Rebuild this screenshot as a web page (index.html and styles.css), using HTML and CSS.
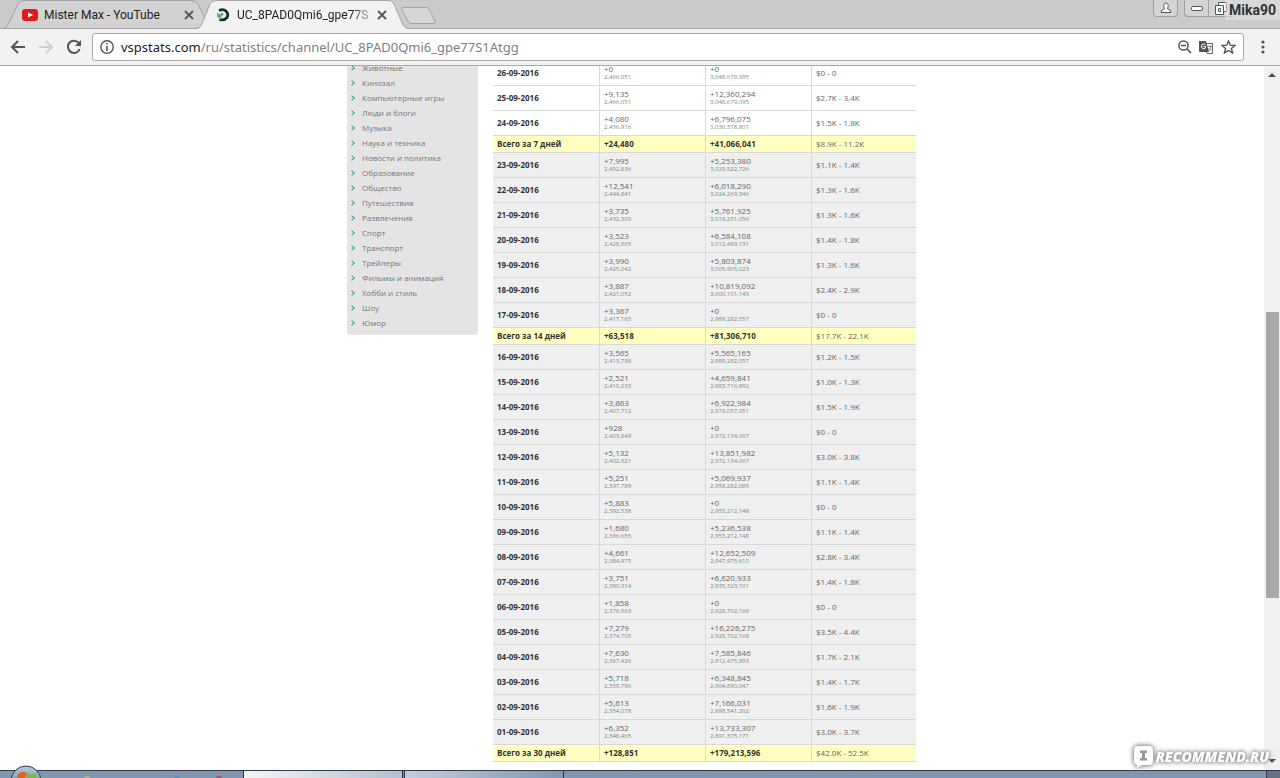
FILE: index.html
```html
<!DOCTYPE html>
<html lang="ru">
<head>
<meta charset="utf-8">
<title>UC_8PAD0Qmi6_gpe77S1Atgg</title>
<link rel="stylesheet" href="styles.css">
</head>
<body>
<div class="screen">
  <header class="tabstrip">
    <svg class="tab-shapes" width="450" height="29" viewBox="0 0 450 29" aria-hidden="true">
      <path d="M0 28.5H3Q7 28.5 9 23L18 4Q20 .5 23 .5H192Q196 .5 198 4L210 28.5" fill="#d2d2d2" stroke="#a3a3a3"/>
      <path d="M196 29Q200 29 202 24L210 4Q212 .5 216 .5H388Q392 .5 394 4L403 25Q405 28.5 409 28.5H450V29Z" fill="#f2f2f2"/>
      <path d="M0 28.5H196Q200 28.5 202 24L210 4Q212 .5 216 .5H388Q392 .5 394 4L403 25Q405 28.5 409 28.5H450" fill="none" stroke="#a3a3a3"/>
      <path d="M404 7.500H426Q428 7.500 429 9L435 21Q436 23.500 434 23.500H411Q409 23.500 408 21L402 10Q401 7.500 404 7.500Z" fill="#d6d6d6" stroke="#a3a3a3"/>
    </svg>
    <div class="tab tab-first">
      <svg width="16" height="12" viewBox="0 0 16 12"><rect width="16" height="12" rx="3" fill="#dd1d1d"/><path d="M6 3.500V8.500L11 6Z" fill="#fff"/></svg>
      <span class="tab-title">Mister Max - YouTube</span>
      <button class="close" aria-label="Закрыть"><svg width="10" height="10" viewBox="0 0 10 10"><path d="M1 1L9 9M9 1L1 9" stroke="#555" stroke-width="1.800"/></svg></button>
    </div>
    <div class="tab tab-active">
      <svg width="14" height="14" viewBox="0 0 14 14"><path d="M3 2.500Q7 .5 10 3Q13 6 11 9.500Q8 13 3.500 11.500" fill="none" stroke="#1f2f2c" stroke-width="2.800"/><path d="M1 4.500V8.500Q3 11 5 11V9L8 6.500L5 4V6Q3 6 1 4.500Z" fill="#64b56c"/></svg>
      <span class="tab-title fade">UC_8PAD0Qmi6_gpe77S</span>
      <button class="close" aria-label="Закрыть"><svg width="10" height="10" viewBox="0 0 10 10"><path d="M1 1L9 9M9 1L1 9" stroke="#555" stroke-width="1.800"/></svg></button>
    </div>
    <div class="window-controls">
      <button class="wbtn user" aria-label="Профиль"><svg width="12" height="12" viewBox="0 0 12 12"><path d="M6 1C3 1 3.500 6 5 6.500Q1 7.500 1 10.500H11Q11 7.500 7 6.500C8.500 6 9 1 6 1Z" fill="#fff" stroke="#555"/></svg></button>
      <button class="wbtn min" aria-label="Свернуть"><svg width="12" height="5" viewBox="0 0 12 5"><rect x=".5" y=".5" width="11" height="4" rx="1.500" fill="#fff" stroke="#555"/></svg></button>
      <button class="wbtn restore" aria-label="Развернуть"><svg width="12" height="13" viewBox="0 0 12 13"><path d="M3.500 3V.5H11.500V9.500H9M.5 3.500H8.500V12.500H.5ZM3.500 6.500H5.500V9.500H3.500Z" fill="#fff" stroke="#555"/></svg></button>
    </div>
    <span class="nick">Mika90</span>
  </header>

  <nav class="toolbar">
    <button aria-label="Назад"><svg width="16" height="14" viewBox="0 0 16 14"><path d="M15 7H2M8 1L2 7L8 13" fill="none" stroke="#555" stroke-width="2"/></svg></button>
    <button aria-label="Вперёд"><svg width="16" height="14" viewBox="0 0 16 14"><path d="M1 7H14M8 1L14 7L8 13" fill="none" stroke="#d0d0d0" stroke-width="2"/></svg></button>
    <button aria-label="Обновить"><svg width="16" height="16" viewBox="0 0 16 16"><path d="M13 4Q10 .8 6 2Q1.500 4 2 8.500Q3 13.500 8 14Q12.500 13.500 13.500 10" fill="none" stroke="#555" stroke-width="2"/><path d="M15 1V7H9Z" fill="#555"/></svg></button>
    <div class="address">
      <svg width="14" height="14" viewBox="0 0 14 14"><circle cx="7" cy="7" r="6.200" fill="none" stroke="#555" stroke-width="1.400"/><path d="M7 3V4.600M7 6V11" stroke="#555" stroke-width="1.600"/></svg>
      <span class="url"><b>vspstats.com</b>/ru/statistics/channel/UC_8PAD0Qmi6_gpe77S1Atgg</span>
      <svg width="14" height="14" viewBox="0 0 14 14"><circle cx="5.500" cy="5.500" r="4.600" fill="none" stroke="#555" stroke-width="1.500"/><path d="M9 9L13 13M3 5.500H8" stroke="#555" stroke-width="1.700"/></svg>
      <svg width="15" height="15" viewBox="0 0 15 15"><path d="M6 3.500H13.500V13.500H8Z" fill="#fff" stroke="#666"/><path d="M0 1H7L10 12H1Q0 12 0 11Z" fill="#555"/><path d="M6.500 4.500Q3 3 2.500 6Q2.500 9 5 9Q7 8.500 6.500 6.500H4.500" fill="none" stroke="#fff"/><path d="M8.500 6.500H13M11 5V6.500M12 7Q11 10 9 11M9.500 8L12.500 11" fill="none" stroke="#777" stroke-width=".8"/></svg>
      <svg width="15" height="14" viewBox="0 0 15 14"><path d="M7.500 1L9.300 5.200L14 5.500L10.400 8.500L11.600 13L7.500 10.500L3.400 13L4.600 8.500L1 5.500L5.700 5.200Z" fill="none" stroke="#555" stroke-width="1.400"/></svg>
    </div>
    <button class="menu" aria-label="Меню"><svg width="4" height="14" viewBox="0 0 4 14"><g fill="#555"><circle cx="2" cy="2" r="1.600"/><circle cx="2" cy="7" r="1.600"/><circle cx="2" cy="12" r="1.600"/></g></svg></button>
  </nav>

  <div class="viewport">
    <main class="page">
      <ul class="categories">
        <li><a href="#">Животные</a></li>
        <li><a href="#">Кинозал</a></li>
        <li><a href="#">Компьютерные игры</a></li>
        <li><a href="#">Люди и блоги</a></li>
        <li><a href="#">Музыка</a></li>
        <li><a href="#">Наука и техника</a></li>
        <li><a href="#">Новости и политика</a></li>
        <li><a href="#">Образование</a></li>
        <li><a href="#">Общество</a></li>
        <li><a href="#">Путешествия</a></li>
        <li><a href="#">Развлечения</a></li>
        <li><a href="#">Спорт</a></li>
        <li><a href="#">Транспорт</a></li>
        <li><a href="#">Трейлеры</a></li>
        <li><a href="#">Фильмы и анимация</a></li>
        <li><a href="#">Хобби и стиль</a></li>
        <li><a href="#">Шоу</a></li>
        <li><a href="#">Юмор</a></li>
      </ul>
      <table class="stats">
        <colgroup><col class="wide"><col class="wide"><col class="wide"><col></colgroup>
        <tbody class="recent">
        <tr><th>26-09-2016</th><td>+0<small>2,466,051</small></td><td>+0<small>3,048,679,095</small></td><td>$0 - 0</td></tr>
        <tr><th>25-09-2016</th><td>+9,135<small>2,466,051</small></td><td>+12,360,294<small>3,048,679,095</small></td><td>$2.7K - 3.4K</td></tr>
        <tr><th>24-09-2016</th><td>+4,080<small>2,456,916</small></td><td>+6,796,075<small>3,036,318,801</small></td><td>$1.5K - 1.8K</td></tr>
        <tr class="total"><th>Всего за 7 дней</th><td><b>+24,480</b></td><td><b>+41,066,041</b></td><td>$8.9K - 11.2K</td></tr>
        </tbody>
        <tbody>
        <tr><th>23-09-2016</th><td>+7,995<small>2,452,836</small></td><td>+5,253,380<small>3,029,522,726</small></td><td>$1.1K - 1.4K</td></tr>
        <tr><th>22-09-2016</th><td>+12,541<small>2,444,841</small></td><td>+6,018,290<small>3,024,269,346</small></td><td>$1.3K - 1.6K</td></tr>
        <tr><th>21-09-2016</th><td>+3,735<small>2,432,300</small></td><td>+5,761,925<small>3,018,251,056</small></td><td>$1.3K - 1.6K</td></tr>
        <tr><th>20-09-2016</th><td>+3,523<small>2,428,565</small></td><td>+6,584,108<small>3,012,489,131</small></td><td>$1.4K - 1.8K</td></tr>
        <tr><th>19-09-2016</th><td>+3,990<small>2,425,042</small></td><td>+5,803,874<small>3,005,905,023</small></td><td>$1.3K - 1.6K</td></tr>
        <tr><th>18-09-2016</th><td>+3,887<small>2,421,052</small></td><td>+10,819,092<small>3,000,101,149</small></td><td>$2.4K - 2.9K</td></tr>
        <tr><th>17-09-2016</th><td>+3,367<small>2,417,165</small></td><td>+0<small>2,989,282,057</small></td><td>$0 - 0</td></tr>
        <tr class="total"><th>Всего за 14 дней</th><td><b>+63,518</b></td><td><b>+81,306,710</b></td><td>$17.7K - 22.1K</td></tr>
        </tbody>
        <tbody>
        <tr><th>16-09-2016</th><td>+3,565<small>2,413,798</small></td><td>+5,565,165<small>2,989,282,057</small></td><td>$1.2K - 1.5K</td></tr>
        <tr><th>15-09-2016</th><td>+2,521<small>2,410,233</small></td><td>+4,659,841<small>2,983,716,892</small></td><td>$1.0K - 1.3K</td></tr>
        <tr><th>14-09-2016</th><td>+3,863<small>2,407,712</small></td><td>+6,922,984<small>2,979,057,051</small></td><td>$1.5K - 1.9K</td></tr>
        <tr><th>13-09-2016</th><td>+928<small>2,403,849</small></td><td>+0<small>2,972,134,067</small></td><td>$0 - 0</td></tr>
        <tr><th>12-09-2016</th><td>+5,132<small>2,402,921</small></td><td>+13,851,982<small>2,972,134,067</small></td><td>$3.0K - 3.8K</td></tr>
        <tr><th>11-09-2016</th><td>+5,251<small>2,397,789</small></td><td>+5,069,937<small>2,958,282,085</small></td><td>$1.1K - 1.4K</td></tr>
        <tr><th>10-09-2016</th><td>+5,883<small>2,392,538</small></td><td>+0<small>2,953,212,148</small></td><td>$0 - 0</td></tr>
        <tr><th>09-09-2016</th><td>+1,680<small>2,386,655</small></td><td>+5,236,538<small>2,953,212,148</small></td><td>$1.1K - 1.4K</td></tr>
        <tr><th>08-09-2016</th><td>+4,661<small>2,384,975</small></td><td>+12,652,509<small>2,947,975,610</small></td><td>$2.8K - 3.4K</td></tr>
        <tr><th>07-09-2016</th><td>+3,751<small>2,380,314</small></td><td>+6,620,933<small>2,935,323,101</small></td><td>$1.4K - 1.8K</td></tr>
        <tr><th>06-09-2016</th><td>+1,858<small>2,376,563</small></td><td>+0<small>2,928,702,168</small></td><td>$0 - 0</td></tr>
        <tr><th>05-09-2016</th><td>+7,279<small>2,374,705</small></td><td>+16,226,275<small>2,928,702,168</small></td><td>$3.5K - 4.4K</td></tr>
        <tr><th>04-09-2016</th><td>+7,630<small>2,367,426</small></td><td>+7,585,846<small>2,912,475,893</small></td><td>$1.7K - 2.1K</td></tr>
        <tr><th>03-09-2016</th><td>+5,718<small>2,359,796</small></td><td>+6,348,845<small>2,904,890,047</small></td><td>$1.4K - 1.7K</td></tr>
        <tr><th>02-09-2016</th><td>+5,613<small>2,354,078</small></td><td>+7,166,031<small>2,898,541,202</small></td><td>$1.6K - 1.9K</td></tr>
        <tr><th>01-09-2016</th><td>+6,352<small>2,348,465</small></td><td>+13,733,307<small>2,891,375,171</small></td><td>$3.0K - 3.7K</td></tr>
        <tr class="total"><th>Всего за 30 дней</th><td><b>+128,851</b></td><td><b>+179,213,596</b></td><td>$42.0K - 52.5K</td></tr>
        </tbody>
      </table>
    </main>
    <div class="scrollbar">
      <svg width="8" height="4" viewBox="0 0 8 4"><path d="M0 4L4 0L8 4Z" fill="#505050"/></svg>
      <div class="track"><div class="thumb"></div></div>
      <svg width="8" height="4" viewBox="0 0 8 4"><path d="M0 0L4 4L8 0Z" fill="#505050"/></svg>
    </div>
  </div>

  <footer class="taskbar">
    <div class="quick">
      <svg class="start" width="32" height="13" viewBox="0 0 32 13" aria-hidden="true">
        <defs><linearGradient id="orb" x2="0" y2="1"><stop stop-color="#b9cbd9"/><stop offset="1" stop-color="#3f6d94"/></linearGradient></defs>
        <circle cx="16" cy="16" r="15" fill="url(#orb)" stroke="#24405e"/>
        <path d="M8 9Q12 5 17 8L15 13H7Z" fill="#e0632c"/><path d="M18 8Q22 11 27 8L26 13H16Z" fill="#7db63c"/>
      </svg>
      <i class="dot gold"></i><i class="dot blue"></i><i class="dot red"></i>
    </div>
    <div class="task current"></div>
    <div class="task"></div>
    <div class="show-desktop"></div>
  </footer>

  <div class="watermark">
    <svg width="23" height="24" viewBox="0 0 23 24" aria-hidden="true"><path d="M5 1H17Q21 1 21 5V16Q21 20 17 20H10L5 23V20Q2 19 2 16V5Q2 1 5 1Z" fill="#fff"/><path d="M8 5.500H15V8H13V13H15V15.500H8V13H10V8H8Z" fill="#999"/></svg>
    <span>RECOMMEND.RU</span>
  </div>
</div>
</body>
</html>
```
FILE: styles.css
```css
* { box-sizing: border-box; }
body { margin: 0; font-family: "Open Sans", "Noto Sans", sans-serif; }
button { border: 0; padding: 0; background: none; display: flex; align-items: center; justify-content: center; }
svg { flex: none; display: block; }

.screen { position: relative; height: 100vh; display: flex; flex-direction: column; overflow: hidden; background: #fff; }

/* Browser frame */
.tabstrip { position: relative; flex: none; height: 29px; display: flex; background: #cbcbcb; border-bottom: 1px solid #a3a3a3; }
.tab-shapes { position: absolute; left: 0; top: 0; }
.tab { position: relative; display: flex; align-items: center; gap: 6px; height: 30px; font-family: Roboto, sans-serif; font-size: 12px; color: #222; white-space: nowrap; }
.tab-first { width: 194px; padding-left: 22px; }
.tab-active { width: 193px; padding-left: 22px; gap: 7px; }
.tab-title { flex: 1; min-width: 0; }
.fade { -webkit-mask-image: linear-gradient(to right, #000 86%, transparent 105%); mask-image: linear-gradient(to right, #000 86%, transparent 105%); }
.window-controls { display: flex; margin-left: auto; height: 17px; padding-right: 46px; }
.wbtn { width: 25px; border: 1px solid #a0a0a0; border-top: 0; background: #d4d4d4; }
.user { margin-right: 6px; border-radius: 0 0 4px 4px; }
.min { border-radius: 0 0 0 4px; }
.restore { border-left: 0; }
.nick { position: absolute; right: 0; top: 0; padding: 0 4px; background: rgba(225, 225, 225, .6); font: bold 14px/20px Roboto, sans-serif; color: #333; }

.toolbar { flex: none; height: 37px; display: flex; align-items: center; padding: 0 15px 0 10px; background: #f2f2f2; border-bottom: 1px solid #aaa; }
.toolbar > button { width: 16px; margin-right: 12px; }
.toolbar > .menu { width: 4px; margin: 0 0 0 17px; }
.address { flex: 1; height: 28px; margin-left: -2px; padding: 0 7px; display: flex; align-items: center; gap: 7px; background: #fff; border: 1px solid #a8a8a8; border-radius: 3px; }
.url { flex: 1; font-family: "Noto Sans", sans-serif; font-size: 13px; color: #808080; white-space: nowrap; }
.url b { font-weight: 400; color: #222; }

/* Page */
.viewport { flex: 1; min-height: 0; display: flex; overflow: hidden; }
.page { flex: 1; display: flex; justify-content: center; align-items: flex-start; gap: 15px; margin-top: -5px; padding-right: 1px; }
.categories { width: 131px; margin: -1px 0 0; padding: 0 0 5px; list-style: none; background: #e4e4e4; border-radius: 0 0 3px 3px; }
.categories li { display: flex; align-items: center; gap: 8px; height: 15px; padding-left: 3px; font-size: 8px; line-height: 15px; }
.categories li::before { content: ""; width: 3px; height: 3px; border: solid #35a98c; border-width: 1px 1px 0 0; transform: rotate(45deg); }
.categories a { color: #777; text-decoration: none; }

.stats { width: 423px; table-layout: fixed; border-collapse: separate; border-spacing: 0; font-size: 8px; line-height: 9px; color: #666; }
.wide { width: 106px; }
.stats th, .stats td { height: 25px; padding: 0 4px; text-align: left; vertical-align: middle; background: #efefef; border-bottom: 1px solid #d8d8d8; }
.stats th { color: #333; }
.stats td { border-left: 1px solid #d8d8d8; }
.stats .recent th, .stats .recent td { background: #fff; }
.stats .total th, .stats .total td { height: 17px; background: #ffffbf; }
.stats th, .stats td:last-child, .stats .total td { padding-bottom: 2px; }
.stats b { color: #333; }
.stats small { display: block; font-size: 6px; line-height: 9px; color: #708d7e; }

.scrollbar { width: 16px; display: flex; flex-direction: column; align-items: center; padding: 7px 0; background: #f1f1f1; }
.track { flex: 1; width: 13px; padding: 5px 0; display: grid; grid-template-rows: 231fr 287fr 156fr; }
.thumb { grid-row: 2; background: #a9a9a9; }

/* Taskbar */
.taskbar { flex: none; height: 8px; display: flex; background: #8296af; border-top: 1px solid #303d50; }
.quick { position: relative; width: 19%; display: flex; align-items: flex-end; gap: 84px; padding-left: 84px; }
.start { position: absolute; left: 10px; bottom: 0; }
.dot { width: 6px; height: 2px; border-radius: 3px 3px 0 0; }
.gold { background: #b5ac87; }
.blue { background: #5f92c4; }
.red { background: #a65866; margin-left: -48px; }
.task { width: 160px; margin-right: 1px; background: linear-gradient(to right, #c3ced9, #8296af); border: solid #27313f; border-width: 0 1px; }
.current { background: linear-gradient(to right, #f3f5f7, #b3bfcc); }
.show-desktop { width: 14px; margin-left: auto; background: #68717e; border-left: 1px solid #303d50; }

.watermark { position: absolute; right: 11px; bottom: 9px; display: flex; align-items: center; gap: 1px; font: italic 800 14px/24px "Open Sans", sans-serif; color: #fff; filter: drop-shadow(0 0 2px #888) drop-shadow(0 0 2px #aaa); }
```
